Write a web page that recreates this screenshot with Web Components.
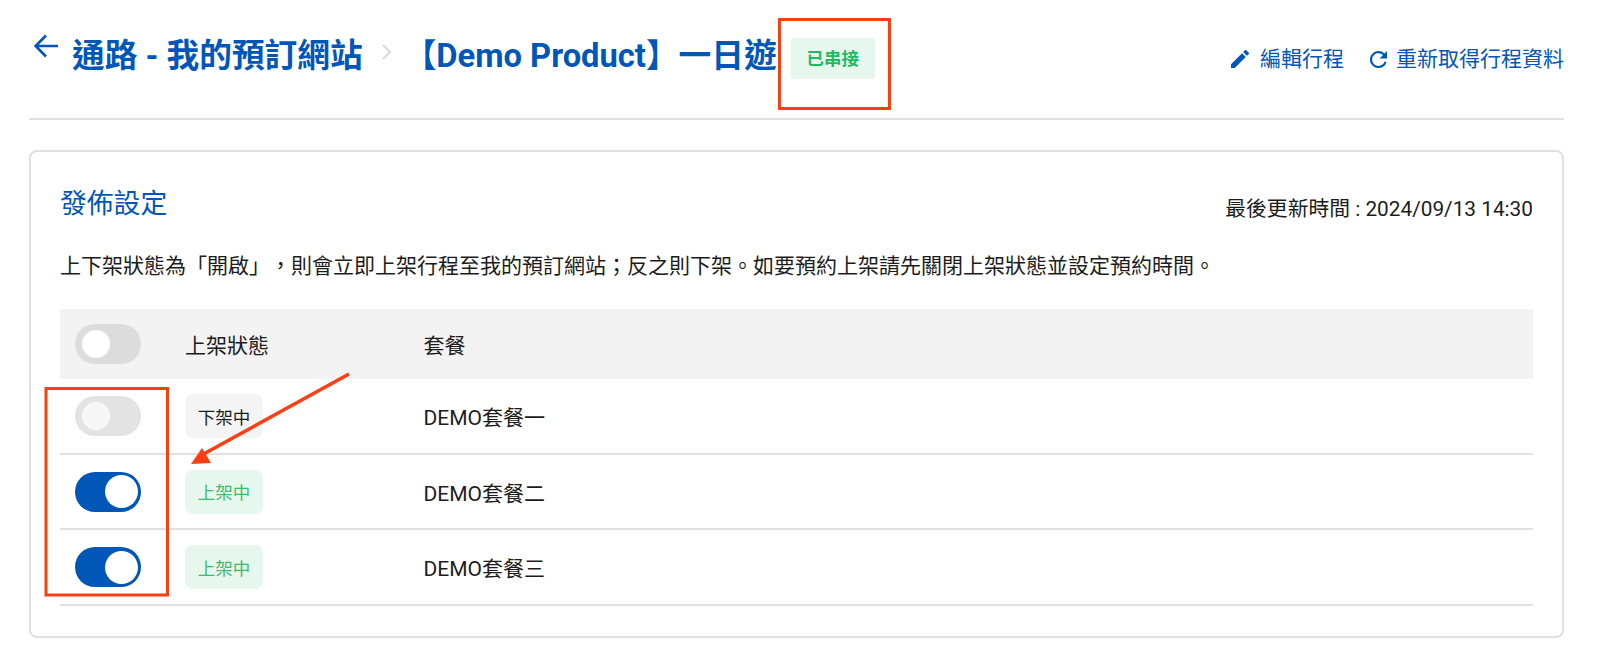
<!DOCTYPE html>
<html lang="zh-Hant">
<head>
<meta charset="utf-8">
<title>發佈設定</title>
<style>
  html, body { margin: 0; background: #fff; }
  body { font-family: Roboto, "Noto Sans CJK TC", sans-serif; color: #1c1c1c; }
</style>
</head>
<body>
<app-page>
  <page-header>
    <status-tag slot="tag" kind="linked">已串接</status-tag>
  </page-header>
  <publish-card>
    <plan-row name="DEMO套餐一" state="off"></plan-row>
    <plan-row name="DEMO套餐二" state="on"></plan-row>
    <plan-row name="DEMO套餐三" state="on"></plan-row>
  </publish-card>
  <note-overlay></note-overlay>
</app-page>

<script>
class AppPage extends HTMLElement {
  constructor() {
    super();
    this.attachShadow({ mode: 'open' }).innerHTML = `
      <style>
        :host { display: block; position: relative; width: 1600px; height: 659px; overflow: hidden;
                box-sizing: border-box; padding: 0 36px 0 29px; }
      </style>
      <slot></slot>
    `;
  }
}

class PageHeader extends HTMLElement {
  constructor() {
    super();
    this.attachShadow({ mode: 'open' }).innerHTML = `
      <style>
        :host { display: flex; justify-content: space-between; box-sizing: border-box; height: 120px;
                border-bottom: 2px solid #e0e0e0; color: #0057b8; }
        .crumbs { display: flex; align-items: flex-start; padding-top: 29px; font-size: 32.7px; font-weight: 700; line-height: 54px; }
        .back { width: 30px; height: 30px; margin: 4px 10px 0 3px; }
        .sep { width: 14px; height: 20px; margin: 13px 10px 0 17px; }
        .tag { display: flex; margin: 9px 0 0 14px; }
        .actions { display: flex; align-items: flex-start; gap: 26px; padding-top: 41px; font-size: 21px; line-height: 36px; }
        .action { display: flex; align-items: center; gap: 11px; }
        .action + .action { gap: 9px; }
        svg { display: block; flex: none; }
      </style>
      <div class="crumbs">
        <svg class="back" viewBox="0 0 30 30" fill="none" stroke="#0057b8" stroke-width="2.6"><path d="M26 13H4M14 2.5 3.6 13 14 23.5"/></svg>
        <span>通路 - 我的預訂網站</span>
        <svg class="sep" viewBox="0 0 14 20" fill="none" stroke="#dcdcdc" stroke-width="2.4"><path d="M3 3l7 7-7 7"/></svg>
        <span>【Demo Product】一日遊</span>
        <div class="tag"><slot name="tag"></slot></div>
      </div>
      <div class="actions">
        <div class="action">
          <svg width="18" height="18" viewBox="3 3 18 18" fill="#0057b8"><path d="M3 17.25V21h3.75L17.81 9.94l-3.75-3.75L3 17.25zM20.71 7.04a1 1 0 0 0 0-1.41l-2.34-2.34a1 1 0 0 0-1.41 0l-1.83 1.83 3.75 3.75 1.83-1.83z"/></svg>
          <span>編輯行程</span>
        </div>
        <div class="action">
          <svg width="17" height="17" viewBox="4 4 16 16" fill="#0057b8"><path d="M17.65 6.35A7.96 7.96 0 0 0 12 4a8 8 0 1 0 7.73 10h-2.08A6 6 0 1 1 12 6c1.66 0 3.14.69 4.22 1.78L13 11h7V4l-2.35 2.35z"/></svg>
          <span>重新取得行程資料</span>
        </div>
      </div>
    `;
  }
}

class StatusTag extends HTMLElement {
  constructor() {
    super();
    this.attachShadow({ mode: 'open' }).innerHTML = `
      <style>
        :host { display: inline-flex; align-items: center; justify-content: center; box-sizing: border-box;
                width: 78px; height: 44px; border-radius: 8px; font-size: 17.5px; font-weight: 400;
                background: #f4f4f4; color: #1c1c1c; }
        :host([kind="on"]) { background: #e6f8ee; color: #3dbb6c; }
        :host([kind="linked"]) { width: 84px; height: 41px; border-radius: 2px; background: #e6f8ee; color: #22b95f; font-weight: 700; }
      </style>
      <slot></slot>
    `;
  }
}

class ToggleSwitch extends HTMLElement {
  constructor() {
    super();
    this.attachShadow({ mode: 'open' }).innerHTML = `
      <style>
        :host { display: flex; align-items: center; box-sizing: border-box; width: 66px; height: 40px;
                border-radius: 20px; padding: 0 7px; background: #e3e3e3; }
        :host([state="head"]) { background: #dcdcdc; }
        :host([state="on"]) { background: #0057b8; justify-content: flex-end; padding: 0 3px; }
        i { display: block; width: 28px; height: 28px; border-radius: 50%; background: #f7f7f7; }
        :host([state="head"]) i { background: #fff; }
        :host([state="on"]) i { width: 33px; height: 33px; background: #fff; }
      </style>
      <i></i>
    `;
  }
}

class PlanRow extends HTMLElement {
  constructor() {
    super();
    this.attachShadow({ mode: 'open' });
  }

  connectedCallback() {
    const on = this.getAttribute('state') === 'on';
    this.shadowRoot.innerHTML = `
      <style>
        :host { display: grid; grid-template-columns: 110.5px 238.5px 1fr; align-items: center; box-sizing: border-box;
                height: 75.5px; padding: 1px 0 0 14.5px; border-bottom: 2px solid #e0e0e0; font-size: 21px; }
        .status { display: flex; }
      </style>
      <toggle-switch state="${on ? 'on' : 'off'}"></toggle-switch>
      <div class="status"><status-tag kind="${on ? 'on' : 'off'}">${on ? '上架中' : '下架中'}</status-tag></div>
      <div>${this.getAttribute('name')}</div>
    `;
  }
}

class PublishCard extends HTMLElement {
  constructor() {
    super();
    this.attachShadow({ mode: 'open' }).innerHTML = `
      <style>
        :host { display: block; box-sizing: border-box; height: 488px; margin-top: 30px; padding: 0 29px;
                border: 2px solid #e0e0e0; border-radius: 8px; font-size: 21px; }
        .top { display: flex; justify-content: space-between; height: 99px; }
        h2 { margin: 32px 0 0; font-size: 26.8px; font-weight: 400; line-height: 40px; color: #0057b8; }
        .time { margin-top: 43px; font-size: 20.8px; line-height: 28px; }
        p { margin: 0; height: 58px; line-height: 30px; white-space: nowrap; text-spacing-trim: space-all; }
        .head { display: grid; grid-template-columns: 110.5px 238.5px 1fr; align-items: center; height: 70px;
                padding-left: 14.5px; background: #f3f3f3; }
      </style>
      <div class="top">
        <h2>發佈設定</h2>
        <div class="time">最後更新時間 : 2024/09/13 14:30</div>
      </div>
      <p>上下架狀態為「開啟」&#xFF0C;則會立即上架行程至我的預訂網站&#xFF1B;反之則下架。如要預約上架請先關閉上架狀態並設定預約時間。</p>
      <div class="head">
        <toggle-switch state="head"></toggle-switch>
        <div>上架狀態</div>
        <div>套餐</div>
      </div>
      <slot></slot>
    `;
  }
}

// red marks drawn on top of the screenshot
class NoteOverlay extends HTMLElement {
  constructor() {
    super();
    this.attachShadow({ mode: 'open' }).innerHTML = `
      <style>
        :host { display: block; position: absolute; inset: 0; pointer-events: none; }
        svg { display: block; }
      </style>
      <svg width="1600" height="659" viewBox="0 0 1600 659" fill="none" stroke="#fb3f14" stroke-width="3">
        <rect x="779.5" y="19.5" width="110" height="89"/>
        <rect x="46" y="388.5" width="121.5" height="206.5"/>
        <path d="M349 374 200 456" stroke-width="3.6"/>
        <path d="M191 464 202 448 211 463z" fill="#fb3f14" stroke="none"/>
      </svg>
    `;
  }
}

customElements.define('app-page', AppPage);
customElements.define('page-header', PageHeader);
customElements.define('status-tag', StatusTag);
customElements.define('toggle-switch', ToggleSwitch);
customElements.define('plan-row', PlanRow);
customElements.define('publish-card', PublishCard);
customElements.define('note-overlay', NoteOverlay);
</script>
</body>
</html>
